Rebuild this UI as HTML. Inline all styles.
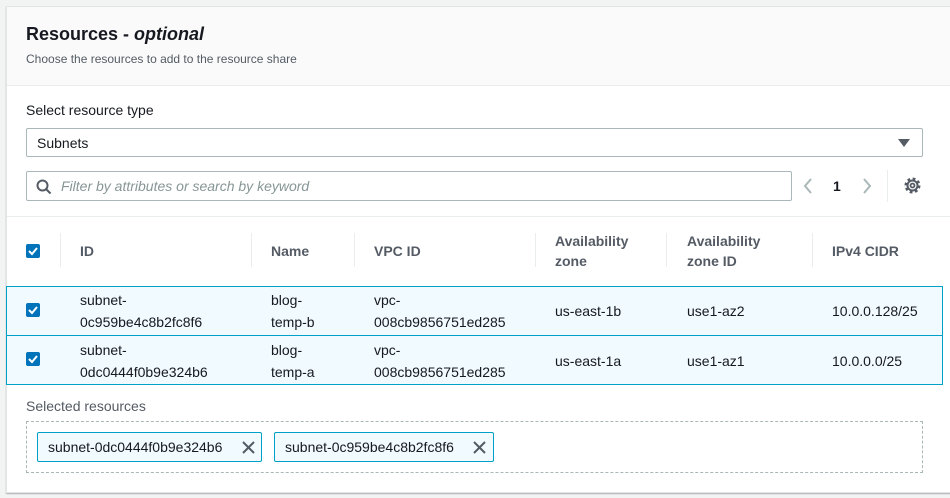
<!DOCTYPE html><html><head><style>
*{box-sizing:border-box;margin:0;padding:0}
body{width:950px;height:498px;background:#f2f3f3;font-family:"Liberation Sans",sans-serif;color:#16191f;position:relative;overflow:hidden;font-size:14px}
.panel{position:absolute;left:6px;top:6px;width:950px;height:487px;background:#fff;border:1px solid #e2e4e5;box-shadow:0 1px 1px rgba(0,28,36,.3)}
.hdr{position:absolute;left:0;top:0;right:0;height:79px;background:#fafafa;border-bottom:1px solid #eaeded}
.abs{position:absolute;white-space:nowrap}
.box{position:absolute;border:1px solid #aab7b8;border-radius:2px;background:#fff}
.th{position:absolute;font-weight:bold;color:#545b64;line-height:20px}
.sep{position:absolute;top:233px;width:1px;height:34px;background:#eaeded}
.row{position:absolute;left:6px;width:937px;height:50px;background:#f1faff;border:1px solid #00a1c9}
.cell{position:absolute;line-height:22px;color:#16191f}
.cb{position:absolute;left:26px;width:14px;height:14px;background:#0073bb;border-radius:2px}
.tok{position:absolute;top:432px;height:30px;border:1px solid #00a1c9;background:#f1faff;border-radius:2px;padding:6px 0 0 10px}
</style></head><body>
<div class="panel"><div class="hdr"></div></div>
<div class="abs" style="left:26px;top:24px;font-size:18px;font-weight:bold">Resources - <i>optional</i></div>
<div class="abs" style="left:26px;top:52px;font-size:12px;color:#545b64">Choose the resources to add to the resource share</div>
<div class="abs" style="left:26px;top:102px">Select resource type</div>
<div class="box" style="left:26px;top:128px;width:897px;height:29px"><span class="abs" style="left:10px;top:6px">Subnets</span>
<svg class="abs" style="left:871px;top:9px" width="12" height="10"><path d="M0 1H12L6 9Z" fill="#545b64"/></svg></div>
<div class="box" style="left:26px;top:171px;width:766px;height:30px">
<svg class="abs" style="left:9px;top:7px" width="16" height="16"><circle cx="6.5" cy="6.5" r="5" fill="none" stroke="#545b64" stroke-width="2"/><path d="M10 10L14.5 14.5" stroke="#545b64" stroke-width="2"/></svg>
<span class="abs" style="left:34px;top:6px;color:#879596;font-style:italic">Filter by attributes or search by keyword</span></div>
<svg class="abs" style="left:803px;top:178px" width="10" height="16"><path d="M8 1L2 8L8 15" fill="none" stroke="#aab7b8" stroke-width="2"/></svg>
<div class="abs" style="left:833px;top:178px;font-weight:bold">1</div>
<svg class="abs" style="left:862px;top:178px" width="10" height="16"><path d="M2 1L8 8L2 15" fill="none" stroke="#aab7b8" stroke-width="2"/></svg>
<div class="abs" style="left:887px;top:170px;width:1px;height:32px;background:#eaeded"></div>
<svg class="abs" style="left:904px;top:177px" width="17" height="17" viewBox="0 0 17 17"><circle cx="8.5" cy="8.5" r="6.5" fill="none" stroke="#545b64" stroke-width="3" stroke-dasharray="2.6 2.5"/><circle cx="8.5" cy="8.5" r="5" fill="none" stroke="#545b64" stroke-width="2"/><circle cx="8.5" cy="8.5" r="2" fill="none" stroke="#545b64" stroke-width="1.8"/></svg>
<div class="abs" style="left:7px;top:216px;width:943px;height:1px;background:#eaeded"></div>
<div class="cb" style="top:244px"><svg width="14" height="14"><path d="M3 7L6 10L11 4" fill="none" stroke="#fff" stroke-width="2"/></svg></div>
<div class="sep" style="left:60px"></div><div class="sep" style="left:251px"></div><div class="sep" style="left:354px"></div><div class="sep" style="left:535px"></div><div class="sep" style="left:666px"></div><div class="sep" style="left:812px"></div>
<div class="th" style="left:80px;top:241px">ID</div>
<div class="th" style="left:271px;top:241px">Name</div>
<div class="th" style="left:374px;top:241px">VPC ID</div>
<div class="th" style="left:555px;top:231px">Availability<br>zone</div>
<div class="th" style="left:687px;top:231px">Availability<br>zone ID</div>
<div class="th" style="left:832px;top:241px">IPv4 CIDR</div>
<div class="row" style="top:286px"></div>
<div class="row" style="top:335px"></div>
<div class="cb" style="top:303px"><svg width="14" height="14"><path d="M3 7L6 10L11 4" fill="none" stroke="#fff" stroke-width="2"/></svg></div>
<div class="cb" style="top:352px"><svg width="14" height="14"><path d="M3 7L6 10L11 4" fill="none" stroke="#fff" stroke-width="2"/></svg></div>
<div class="cell" style="left:80px;top:289px">subnet-<br>0c959be4c8b2fc8f6</div>
<div class="cell" style="left:271px;top:289px">blog-<br>temp-b</div>
<div class="cell" style="left:374px;top:289px">vpc-<br>008cb9856751ed285</div>
<div class="cell" style="left:555px;top:300px">us-east-1b</div>
<div class="cell" style="left:687px;top:300px">use1-az2</div>
<div class="cell" style="left:832px;top:300px">10.0.0.128/25</div>
<div class="cell" style="left:80px;top:339px">subnet-<br>0dc0444f0b9e324b6</div>
<div class="cell" style="left:271px;top:339px">blog-<br>temp-a</div>
<div class="cell" style="left:374px;top:339px">vpc-<br>008cb9856751ed285</div>
<div class="cell" style="left:555px;top:350px">us-east-1a</div>
<div class="cell" style="left:687px;top:350px">use1-az1</div>
<div class="cell" style="left:832px;top:350px">10.0.0.0/25</div>
<div class="abs" style="left:26px;top:398px;color:#545b64">Selected resources</div>
<div class="abs" style="left:26px;top:421px;width:897px;height:52px;border:1px dashed #aab7b8"></div>
<div class="tok" style="left:37px;width:225px">subnet-0dc0444f0b9e324b6
<svg class="abs" style="left:204px;top:8px" width="13" height="13"><path d="M1 1L12 12M12 1L1 12" stroke="#545b64" stroke-width="2"/></svg></div>
<div class="tok" style="left:274px;width:220px">subnet-0c959be4c8b2fc8f6
<svg class="abs" style="left:198px;top:8px" width="13" height="13"><path d="M1 1L12 12M12 1L1 12" stroke="#545b64" stroke-width="2"/></svg></div>
</body></html>
